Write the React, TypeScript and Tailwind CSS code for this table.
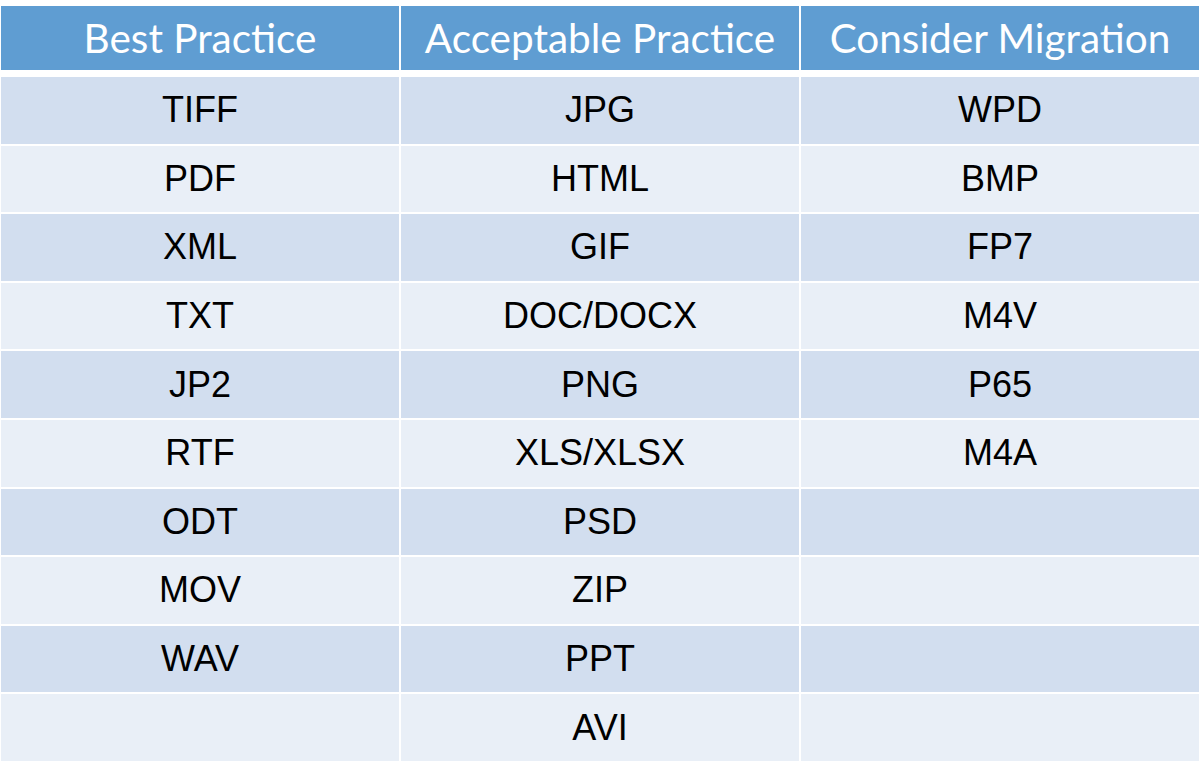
import React from 'react';

const headers = ['Best Practice', 'Acceptable Practice', 'Consider Migration'];

const rows: string[][] = [
  ['TIFF', 'JPG', 'WPD'],
  ['PDF', 'HTML', 'BMP'],
  ['XML', 'GIF', 'FP7'],
  ['TXT', 'DOC/DOCX', 'M4V'],
  ['JP2', 'PNG', 'P65'],
  ['RTF', 'XLS/XLSX', 'M4A'],
  ['ODT', 'PSD', ''],
  ['MOV', 'ZIP', ''],
  ['WAV', 'PPT', ''],
  ['', 'AVI', ''],
];

const App: React.FC = () => {
  return (
    <div className="w-[1200px] h-[776px] bg-white pt-[6px] pl-[1px]">
      {/* Header */}
      <div className="grid grid-cols-[398px_398px_398px] gap-x-[2px] mb-[7px]">
        {headers.map((h) => (
          <div
            key={h}
            className="h-[64px] bg-[#5f9dd2] text-white flex items-center justify-center text-[40.5px] font-['Lato',sans-serif] leading-none"
          >
            {h}
          </div>
        ))}
      </div>

      {/* Body rows */}
      <div className="flex flex-col gap-y-[2px]">
        {rows.map((row, i) => (
          <div key={i} className="grid grid-cols-[398px_398px_398px] gap-x-[2px]">
            {row.map((cell, j) => (
              <div
                key={j}
                className={`h-[66.6px] flex items-center justify-center text-[36px] text-black font-['Liberation_Sans',Arial,sans-serif] leading-none ${
                  i % 2 === 0 ? 'bg-[#d2deef]' : 'bg-[#e9eff7]'
                }`}
              >
                {cell}
              </div>
            ))}
          </div>
        ))}
      </div>
    </div>
  );
};

export default App;
